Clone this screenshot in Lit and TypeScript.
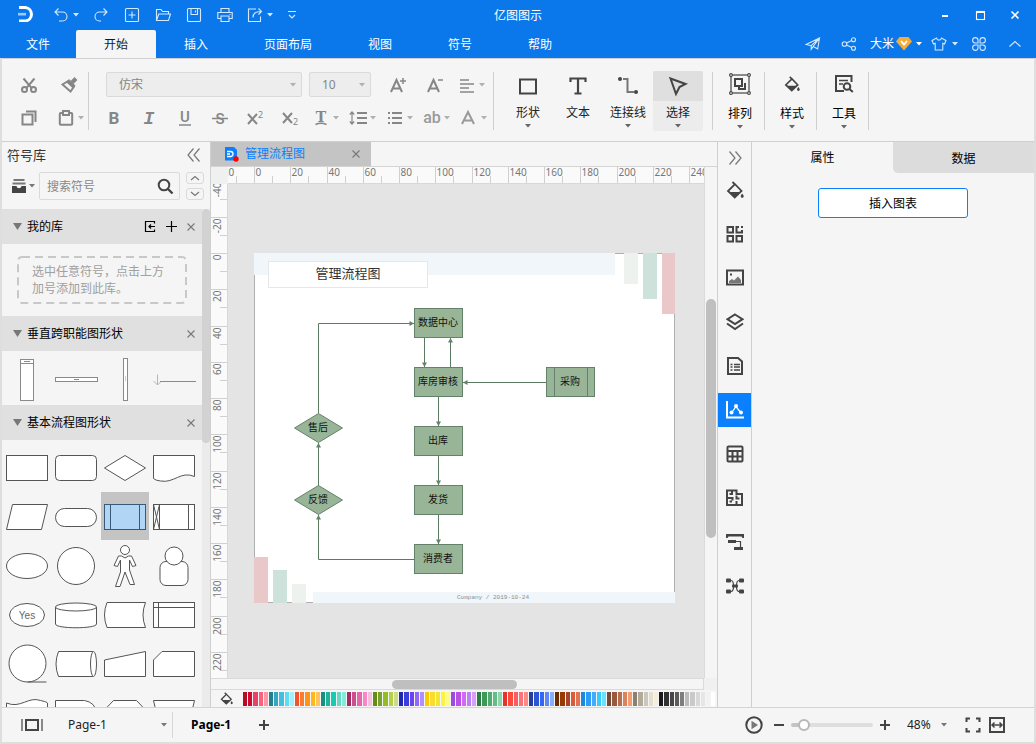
import { LitElement, html, svg, css, type TemplateResult, type SVGTemplateResult } from "lit";
import { customElement, state } from "lit/decorators.js";
import { classMap } from "lit/directives/class-map.js";

/* ---------- icon helpers ---------- */

const icon = (body: SVGTemplateResult, w = 16, h = 16) => html`<svg
  class="ico" width=${w} height=${h} viewBox="0 0 ${w} ${h}" aria-hidden="true">${body}</svg>`;

const caret = () => html`<svg class="caret" width="6" height="4" viewBox="0 0 6 4" aria-hidden="true"><path d="M0 0h6L3 3.5z"/></svg>`;

const cross = () => icon(svg`<path d="M1.5 1.5l7 7M8.5 1.5l-7 7" stroke-width="1.1"/>`, 10, 10);

const bucket = (s = 18) => html`<svg class="ico" width=${s} height=${s} viewBox="0 0 18 18" aria-hidden="true">
  <path d="M6.5 1l2.5 2.5M9 3.2L2 10l6.7 6.5 6.8-6.500z" stroke-width="1.8"/>
  <path class="f" d="M3 11h11.500l-5.800 5.500z"/><path class="f" d="M16.200 12.500c1 1.400 1.500 2 1.500 2.800a1.500 1.500 0 0 1-3 0c0-.8.500-1.400 1.500-2.800z"/></svg>`;

const I = {
  logo: svg`<path d="M1 1.5h6.500a6.800 6.800 0 0 1 0 13.500H1" fill="none" stroke="#fff" stroke-width="3"/><path d="M0 8.200h8" stroke="#9ccbfb" stroke-width="2.600"/>`,
  undo: svg`<path d="M5.5 1.5L2 5l3.500 3.500M2 5h7.500a4.500 4.500 0 0 1 0 9H6"/>`,
  redo: svg`<path d="M10.5 1.5L14 5l-3.500 3.500M14 5H6.500a4.500 4.500 0 0 0 0 9H8"/>`,
  add: svg`<rect x="1.5" y="1.5" width="13" height="13" rx="1"/><path d="M8 4.5v7M4.500 8h7"/>`,
  open: svg`<path d="M1.500 13.500V2.500h4.500l1.500 2h6v2.500M1.500 13.500l2.300-6.500h11.700l-2 6.500z"/>`,
  save: svg`<rect x="1.500" y="1.500" width="13" height="13" rx="1"/><path d="M5 1.500v6h6.500v-6M9.500 3.500v2"/>`,
  print: svg`<path d="M4 5V1.500h8V5M4 11.500H.800V5.500h14.400v6H12M4 9h8v5.500H4zM12.500 7.500h1"/>`,
  export: svg`<path d="M9 2H1.500v12.500h12V9.500M6 10.500c0-4 2.500-6 8-6M11.500 1.500l3 3-3 3"/>`,
  more: svg`<path d="M4 4.500h8M5 8l3 3 3-3"/>`,
  send: svg`<path d="M1 8.500L14.500 2l-1.800 11-4.500-2.500-2 2.800V9.700zM6.200 9.700L14.500 2 8.200 10.500"/>`,
  share: svg`<circle cx="3.500" cy="8" r="2.300"/><circle cx="12.500" cy="3.700" r="2"/><circle cx="12.500" cy="12.300" r="2"/><path d="M5.500 7l5.200-2.500M5.500 9l5.200 2.500"/>`,
  gem: svg`<path d="M3.500 1h9L16 5.500 8 14.500 0 5.500z" fill="#f6ac3a" stroke="none"/><path d="M5 5l3 3.500L11 5" stroke="#fff" stroke-width="1.800"/>`,
  shirt: svg`<path d="M5.500 2C6 4.800 10 4.800 10.500 2L15 4.500 13.500 8l-1.700-.7V14H4.200V7.300L2.500 8 1 4.500z"/>`,
  apps: svg`<path d="M7 7H4a2.700 2.700 0 1 1 3-3zM9 7V4a2.700 2.700 0 1 1 3 3zM7 9H4a2.700 2.700 0 1 0 3 3zM9 9v3a2.700 2.700 0 1 0 3-3z"/>`,
  up: svg`<path d="M2.500 10.500L8 5.500l5.500 5"/>`,
  min: svg`<path d="M5 9h6" stroke-width="2"/>`,
  max: svg`<rect x="4.500" y="4.500" width="8" height="8"/><path d="M4 5h9" stroke-width="2"/>`,
  close: svg`<path d="M4.500 4.500l7 7M11.500 4.500l-7 7" stroke-width="1.600"/>`,

  cut: svg`<path d="M2.500 1.500l8.200 9.700M13.500 1.500L5.300 11.200"/><circle cx="3.500" cy="12.500" r="2.500"/><circle cx="12.500" cy="12.500" r="2.500"/>`,
  brush: svg`<path d="M1.500 7.500L8 3.500l5 6-3.500 5z"/><path d="M11 5.500l4-4" stroke-width="4"/><path class="f" d="M8 2.500l6.500 6-2.500 3L5 5z"/>`,
  copy: svg`<rect x="1.500" y="4.500" width="10" height="10"/><path d="M5 1.500h9.500V12"/>`,
  paste: svg`<rect x="1.800" y="3" width="12.400" height="11.800" rx="1"/><rect x="5" y="1" width="6" height="4" fill="#f5f5f5"/>`,
  align: svg`<path d="M1 3h9M1 7h14M1 11h9M1 15h14" stroke-width="1.700"/>`,
  under: svg`<text x="8" y="12" text-anchor="middle" class="g u">U</text><path d="M2 15h12" stroke-width="1.500"/>`,
  strike: svg`<text x="8" y="13.500" text-anchor="middle" class="g u">S</text><path d="M0 8.500h16" stroke-width="1.500"/>`,
  bold: svg`<text x="7" y="14" text-anchor="middle" class="g b">B</text>`,
  ital: svg`<text x="7" y="14" text-anchor="middle" class="g i">I</text>`,
  sup: svg`<path d="M1 4l9 10M10 4L1 14"/><text x="11" y="8" class="g n">2</text>`,
  sub: svg`<path d="M1 3l9 10M10 3L1 13"/><text x="11" y="15" class="g n">2</text>`,
  effect: svg`<text x="8" y="11.500" text-anchor="middle" class="g t">T</text><path d="M2.500 14.500q5.500-2.500 11 0" stroke-width="1.500"/>`,
  spacing: svg`<path d="M7 3h10M7 8h10M7 13h10"/><path d="M2 2v12M-.2 4.500L2 2l2.200 2.500M-.2 11.500L2 14l2.200-2.500" stroke-width="1.200"/>`,
  list: svg`<path d="M5 3h10M5 8h10M5 13h10"/><path d="M1 3h2M1 8h2M1 13h2"/>`,
  ab: svg`<text x="8" y="13" text-anchor="middle" class="g ab">ab</text>`,
  fontA: svg`<path d="M1 14L7 2l6 12M3 10.500h8" stroke="#9a9a9a"/>`,
  bigger: svg`<path d="M1 15L6.500 3 12 15M3 11.500h7"/><path d="M13 1v6M10 4h6" stroke-width="1.500"/>`,
  smaller: svg`<path d="M1 15L6.500 3 12 15M3 11.500h7"/><path d="M11 3h5" stroke-width="1.500"/>`,

  shape: svg`<rect x="3" y="4.500" width="16" height="14"/>`,
  text: svg`<path d="M3.500 7V3.500h15V7M11 3.500V19M7.500 18.500h7" stroke-width="2.200"/>`,
  conn: svg`<path d="M6 4h4.500v13H17" stroke="#777"/><circle class="f" cx="3" cy="4" r="2"/><circle class="f" cx="19" cy="17" r="2"/>`,
  pick: svg`<path d="M3.500 3.500l15 5.500-6 3-3.500 7z"/>`,
  arrange: svg`<rect x="2" y="2" width="18" height="18" stroke-width="1.200"/><g fill="#f5f5f5" stroke-width="1.100"><circle cx="2" cy="2" r="1.400"/><circle cx="20" cy="2" r="1.400"/><circle cx="2" cy="20" r="1.400"/><circle cx="20" cy="20" r="1.400"/></g><rect x="6" y="6" width="7" height="7"/><path d="M16 10v6h-6v-2"/>`,
  tools: svg`<path d="M18.500 9V3H3v15h8"/><path d="M6 7.500h9M6 11h4" stroke-width="1.500"/><circle cx="14" cy="13.500" r="3.300"/><path d="M16.500 16l3.300 3"/>`,

  chevL: svg`<path d="M7.500 1.500L2 8l5.500 6.500M13.500 1.500L8 8l5.500 6.500"/>`,
  chevR: svg`<path d="M2.500 1.500L8 8l-5.500 6.500M8.500 1.500L14 8l-5.500 6.500"/>`,
  stash: svg`<path class="m" d="M2.500 1h11v2h-11zM1.500 4.500h13v2h-13z"/><path class="f" d="M1 8h4.500c.5 3 4.500 3 5 0H15v7H1z"/>`,
  search: svg`<circle cx="7" cy="7" r="5.300"/><path d="M11 11l4.500 4.500" stroke-width="2.400"/>`,
  imp: svg`<path d="M10.500 3.500v-2h-9v10h9v-2"/><path d="M11 6.500H5M7 4.500l-2 2 2 2"/>`,
  plus: svg`<path d="M6.500 1v11M1 6.500h11"/>`,

  grid: svg`<rect x="1.500" y="2" width="5.500" height="5.500"/><path d="M13 2h-2.500v5.500H16V5"/><rect x="1.500" y="11" width="5.500" height="5.500"/><rect x="10.500" y="11" width="5.500" height="5.500"/><path d="M16 1v2"/>`,
  image: svg`<rect x="1" y="1.500" width="16" height="14"/><path class="m" d="M3 14v-2l3-2 2 1.500 4-4L15 11v3z"/><rect class="f" x="4" y="4.500" width="2" height="2" stroke="none"/>`,
  layers: svg`<path d="M9 1.500l7.500 4.700L9 11 1.500 6.200z"/><path d="M1 10.500l8 5.500 8-5.500"/>`,
  doc: svg`<path d="M2 1h10l4 3.500V17H2z"/><path d="M4.500 7.500h2M4.500 10h2M4.500 13h2M8 7.500h6M8 10h6M8 13h6" stroke-width="1.300"/>`,
  chart: svg`<path d="M1 0v16.500h17" stroke-width="2"/><path d="M5.500 12L10 5.500l5 6.500" stroke-width="1.300"/><g class="f"><circle cx="5.500" cy="11.500" r="2"/><circle cx="10" cy="5" r="2"/><circle cx="15" cy="11.500" r="2"/></g>`,
  table: svg`<rect x="1.500" y="1.500" width="15" height="15" rx="1"/><path d="M1.500 6h15M1.500 11.500h15M6.500 6v10.500M11.500 6v10.500"/>`,
  plan: svg`<path d="M1 1.500h9.500V5H16v11H1zM6 1.500V5H3.500M1 9h5.500v2.500M10.500 6.500v3h3M6 12.500H3.500M10.500 12v4"/>`,
  gantt: svg`<path class="f" d="M0 1h18v4h-1.500L15.500 3.500h-13L1.500 5H0zM2 7h8v3H2zM8 14h9v3H8z"/><path d="M10 8.500h4.500V14" stroke-width="1.200"/>`,
  mind: svg`<g class="f"><rect x="0" y="1.500" width="5" height="4" rx="1"/><rect x="13" y="1.500" width="5" height="4" rx="1"/><rect x="0" y="12.500" width="5" height="4" rx="1"/><rect x="13" y="12.500" width="5" height="4" rx="1"/><rect x="6" y="7.500" width="6" height="3" rx="1"/></g><path d="M5 3.500q2.500 0 2.500 5.500T5 14.500M13 3.500q-2.500 0-2.500 5.500t2.500 5.500" stroke-width="1.200"/>`,

  pages: svg`<rect x="6" y="3" width="12" height="10"/><path d="M2 2v12M22 2v12" stroke="#888"/>`,
  play: svg`<circle cx="9" cy="9" r="7.700"/><path class="m" d="M6.500 4.800L13 9l-6.500 4.200z"/>`,
  full: svg`<path d="M1.500 5V1.500H5M11 1.500h3.500V5M14.500 11v3.500H11M5 14.500H1.500V11"/>`,
  fit: svg`<rect x="1" y="1" width="14" height="14"/><path d="M3 8h10M5.500 5.500L3 8l2.500 2.500M10.500 5.500L13 8l-2.500 2.500" stroke-width="1.500"/>`,
};

/* ---------- data ---------- */

const MENU = ["文件", "开始", "插入", "页面布局", "视图", "符号", "帮助"];

const PALETTE = (
  "b30f23 cf0a33 ea4164 f9637b fa98a6 267f8c 35a7c4 41bfdc 5edcf2 a3f0fc f2542b fb7a33 ff9419 ffb81a fec35e " +
  "18907b 1cb49b 18cbb0 64d9c6 86ead9 9f2f63 cd4d8e e566aa f986c7 f0c2dc 678b14 78a32b 93bd22 b3d046 ccdb8b " +
  "2127ae 3a3fd9 6c41ef 9069f8 ad90f8 fbc905 fbdb2f f0e72e fbf243 fcfb87 9a4cdd bb51e4 d267f8 bb82f8 d79ffb " +
  "2c7b46 3b9955 4fab70 63bd87 8fd5aa e6332b fb4b3c fb5d60 fc7475 fc8b85 233f9e 2c55d4 3366f5 6188fb 88aef7 " +
  "6b2c05 973a05 a9442a d65c3b e17354 1b89dc 2f9df7 40acfd 38ccfc 69e3fd 774a38 985941 ba6e50 d8855f f79c6f " +
  "8c8072 b2ab9c c9c8b9 e3decd f4eedb 1b1b1b 323234 464646 5c5c5c 7e7e7e bcbcbc c9c9c9 d8d8d8 e6e6e6 f2f2f2 ffffff"
).split(" ");

const NODES = [
  { t: "数据中心", y: 55 },
  { t: "库房审核", y: 114 },
  { t: "出库", y: 173 },
  { t: "发货", y: 232 },
  { t: "消费者", y: 291 },
];

/* Each symbol sits in a 48 x 48 cell. */
const SHAPES: SVGTemplateResult[] = [
  svg`<rect x="3.500" y="12.500" width="41" height="25"/>`,
  svg`<rect x="3.500" y="12.500" width="41" height="25" rx="4"/>`,
  svg`<path d="M24 12.500L44.500 25 24 37.500 3.500 25z"/>`,
  svg`<path d="M3.500 12.500h41v21c-14-6-20 7-34 4.500q-5-.5-7-2.500z"/>`,
  svg`<path d="M9.500 12.500h35l-6 25h-35z"/>`,
  svg`<rect x="3.500" y="16.500" width="41" height="18" rx="9"/>`,
  svg`<rect x="3.500" y="12.500" width="41" height="25"/><path d="M9.500 12.500v25M38.500 12.500v25"/>`,
  svg`<rect x="3.500" y="12.500" width="41" height="25"/><path d="M9.500 12.500v25M38.500 12.500v25M3.500 12.500l6 25M9.500 12.500l-6 25"/>`,
  svg`<ellipse cx="24" cy="25" rx="20.500" ry="12.500"/>`,
  svg`<circle cx="24" cy="25" r="18.500"/>`,
  svg`<circle cx="24" cy="9" r="4.500"/><path d="M17.500 15h3l3.500 2 3.500-2h3l4.500 9.500-3.500 1-3-6.500v10l5 14.500h-4.500L24 31l-5 14.500h-4.500l5-14.500V19l-3 6.500-3.500-1z"/>`,
  svg`<rect x="10" y="20.500" width="28" height="24" rx="6"/><circle cx="24" cy="15" r="9"/>`,
  svg`<ellipse cx="24" cy="25" rx="17.500" ry="11.500"/><text x="24" y="29" text-anchor="middle">Yes</text>`,
  svg`<path d="M3.500 17v17c0 5 41 5 41 0V17"/><ellipse cx="24" cy="17" rx="20.500" ry="4"/>`,
  svg`<path d="M6 12.500h38.500q-5 12.500 0 25H6q-5-12.500 0-25z"/>`,
  svg`<rect x="3.500" y="12.500" width="41" height="25"/><path d="M8.500 12.500v25M3.500 17.500h41"/>`,
  svg`<circle cx="24.500" cy="24.500" r="18.500"/><path d="M24.500 43h19"/>`,
  svg`<path d="M41.500 12.500H6.500q-5 12.500 0 25h35"/><ellipse cx="41.500" cy="25" rx="3" ry="12.500"/>`,
  svg`<path d="M3.500 21l41-8.500v25h-41z"/>`,
  svg`<path d="M12 12.500h32.500v25h-41V21z"/>`,
  svg`<path d="M3.500 15c14 6 22-7 34-2.500 4 1 5 1 7 2.500v22h-41z"/>`,
  svg`<path d="M3.500 12.500h29q11 2 12 12.500v12.500h-41z"/>`,
  svg`<path d="M3.500 22l9-9.500h23l9 9.500v15h-41z"/>`,
  svg`<path d="M3.500 12.500h41l-6 25h-29z"/>`,
];

const RAIL: [string, () => TemplateResult][] = [
  ["填充", () => bucket()],
  ["符号", () => icon(I.grid, 18, 18)],
  ["图片", () => icon(I.image, 18, 18)],
  ["图层", () => icon(I.layers, 18, 18)],
  ["备注", () => icon(I.doc, 18, 18)],
  ["图表", () => icon(I.chart, 18, 18)],
  ["表格", () => icon(I.table, 18, 18)],
  ["平面图", () => icon(I.plan, 18, 18)],
  ["甘特图", () => icon(I.gantt, 18, 18)],
  ["思维导图", () => icon(I.mind, 18, 18)],
];

/* Ruler marks: one label for every 20 units. */
const UNIT = 36.25;
const marks = (from: number, to: number, origin: number) =>
  Array.from({ length: to - from + 1 }, (_, k) => ({
    v: (from + k) * 20,
    p: Math.round(origin + (from + k) * UNIT) + 0.5,
  }));

@customElement("app-root")
export class AppRoot extends LitElement {
  @state() private menu = 1;
  @state() private rail = 5;
  @state() private picked = 6;
  @state() private zoom = 48;

  static styles = css`
    :host {
      display: flex;
      flex-direction: column;
      height: 100vh;
      overflow: hidden;
      background: #f5f5f5;
      color: #1a1a1a;
      font: 12px/16px "Noto Sans", "Noto Sans CJK SC", sans-serif;
    }
    * { box-sizing: border-box; }
    button, input, select { font: inherit; color: inherit; margin: 0; padding: 0; border: 0; background: none; border-radius: 0; outline: 0; }
    button { display: flex; align-items: center; justify-content: center; }
    select { appearance: none; }
    svg { display: block; flex: none; }
    .ico { fill: none; stroke: currentColor; stroke-width: 2; }
    .ico .f { fill: currentColor; stroke: none; }
    .ico .m { fill: #777; stroke: none; }
    .caret { fill: currentColor; }
    .grow { flex: 1; }

    /* header */
    .head { background: #0a78ea; color: #fff; flex: none; }
    .head .ico { stroke-width: 1.1; }
    .bar { display: grid; grid-template-columns: 1fr auto 1fr; height: 30px; align-items: center; }
    .name0 { padding-top: 2px; }
    .quick { display: flex; color: #d5e8fc; }
    .quick button { width: 31px; height: 30px; gap: 4px; }
    .quick .drop { width: 39px; }
    .quick .last { width: 26px; }
    .logo { width: 46px; padding: 6px 0 0 18px; }
    .win { display: flex; justify-content: flex-end; padding-right: 4px; }
    .win button { width: 35px; height: 28px; }
    .menus { display: flex; height: 28px; }
    .menus .tab { padding: 2px 28px 0; height: 28px; }
    .menus .tab:first-child { padding: 2px 26px 0; }
    .menus .on { background: #f5f5f5; color: #1a1a1a; border-radius: 2px 2px 0 0; }
    .acct { display: flex; align-items: center; margin-left: auto; padding-right: 13px; color: #d5e8fc; }
    .acct button { height: 24px; margin-left: 20px; }
    .acct .user { color: #fff; gap: 2px; margin-left: 13px; }
    .acct .user .caret { margin-left: 2px; }
    .acct .skin { gap: 5px; margin-left: 9px; }
    .acct .apps { margin-left: 13px; }

    .frame { flex: 1; min-height: 0; display: flex; flex-direction: column; border: solid #dedede; border-width: 0 2px 2px; }

    /* ribbon */
    .ribbon { display: flex; height: 84px; flex: none; border: solid #cfcfcf; border-width: 1px 0; padding: 13px 0 10px; color: #868686; }
    .ribbon .caret { fill: #b0b0b0; }
    .clip { display: grid; grid-template: 25px 24px / 40px 40px; row-gap: 9px; padding-left: 7px; margin-right: -1px; }
    .clip button, .fonts button { gap: 4px; }
    .clip .drop { padding-left: 4px; }
    .sep { width: 1px; height: 58px; background: #cfcfcf; }
    .fonts { display: flex; flex-direction: column; gap: 9px; margin: 0 1px 0 8px; }
    .row { display: flex; height: 25px; }
    .row + .row { height: 24px; }
    .row button { width: 35px; }
    .row .w { width: 37px; }
    .row .ico, .clip .ico { overflow: visible; }
    .combo { display: grid; align-items: center; border: 1px solid #dadada; border-radius: 2px; background: #ededed; width: 196px; margin: 0 7px 0 9px; }
    .combo.size { width: 62px; margin: 0 8px 0 0; }
    .combo select, .combo .caret { grid-area: 1 / 1; }
    .combo select { width: 100%; height: 23px; padding-left: 12px; }
    .combo .caret, .pagepick .caret { justify-self: end; margin-right: 5px; pointer-events: none; }
    .g { fill: currentColor; stroke: none; }
    .g.b { font: 700 17px Roboto; }
    .g.i { font: italic 700 18px "Liberation Mono"; }
    .g.u { font: 500 15px Roboto; }
    .g.n { font: 9px "Noto Sans"; }
    .g.t { font: 700 14px "DejaVu Serif"; }
    .g.ab { font: 500 16px Roboto; fill: #9a9a9a; }
    .big { display: flex; padding-left: 9px; margin-right: 9px; }
    .tool { width: 50px; height: 60px; flex-direction: column; justify-content: flex-start; color: #222; margin-top: -1px; border-radius: 2px; }
    .tool .pic { height: 30px; width: 100%; display: grid; place-items: center; color: #444; }
    .tool .name { margin-top: 4px; height: 17px; }
    .tool .caret { fill: #666; margin-top: 2px; }
    .tool.on { background: #ececec; }
    .tool.on .pic { background: #dfdfdf; border-radius: 2px 2px 0 0; }
    .tool.far { width: 51px; padding-left: 3px; }
    .tool.far .pic { height: 26px; }
    .tool.far .name { margin-top: 9px; color: #000; }

    /* body */
    .body { flex: 1; min-height: 0; display: flex; }
    .lib { width: 209px; border-right: 1px solid #cfcfcf; display: flex; flex-direction: column; flex: none; }
    .libtop { display: flex; justify-content: space-between; align-items: center; height: 26px; padding: 0 8px 0 5px; font-size: 13px; color: #333; }
    .libtop .ico, .rail .more .ico { stroke-width: 1.2; color: #777; }
    .find { display: flex; height: 28px; margin: 4px 6px 9px 0; }
    .stash { width: 37px; gap: 2px; color: #444; padding-left: 5px; }
    .stash .caret { fill: #777; }
    .box { flex: 1; display: flex; align-items: center; border: 1px solid #dadada; border-radius: 2px; padding: 0 5px 0 7px; color: #444; }
    .box input { flex: 1; width: 0; height: 26px; }
    .box input::placeholder { color: #888; opacity: 1; }
    .steps { display: grid; gap: 4px; width: 18px; margin-left: 6px; }
    .steps button { border: 1px solid #dadada; border-radius: 3px; height: 12px; color: #777; }
    .steps .ico { stroke-width: 1.2; }
    .scroll { flex: 1; min-height: 0; display: flex; background: #ebebeb; }
    .list { flex: 1; overflow: hidden; background: #f5f5f5; }
    .thumb { width: 8px; height: 47%; background: #d2d2d2; border-radius: 4px; }
    .sec { display: flex; align-items: center; height: 35px; background: #e0e0e0; color: #000; padding: 0 6px 0 11px; }
    .sec .tri { fill: #777; margin-right: 5px; }
    .sec h2 { font: inherit; margin: 0; flex: 1; }
    .sec button { margin-left: 8px; height: 21px; }
    .sec .ico { stroke-width: 1.2; }
    .sec .x { color: #777; margin-left: 8px; }
    .hint { margin: 12px 15px; border-radius: 4px; padding: 6px 15px; height: 48px; line-height: 17px; color: #a0a0a0; display: grid; }
    .hint svg, .hint p { grid-area: 1 / 1; }
    .hint svg { margin: -6px -15px; }
    .hint p { margin: 1px 0 0; }
    .lanes { height: 54px; fill: #fff; stroke: #8a8a8a; }
    .shapes { display: grid; grid-template-columns: repeat(4, 48px); gap: 1px; padding: 3px 0 0 1px; }
    .shapes button { height: 48px; }
    .shapes svg { fill: #fff; stroke: #555; }
    .shapes text { fill: #666; stroke: none; font: 10px "Liberation Sans"; }
    .shapes .on { background: #c4c4c4; }
    .shapes .on svg { fill: #b0d5f5; stroke: #3a5878; }

    .mid { flex: 1; min-width: 0; display: flex; flex-direction: column; }
    .docs { height: 25px; border-bottom: 1px solid #d4d4d4; display: flex; flex: none; }
    .doc { display: flex; align-items: center; width: 160px; background: #c4c4c4; color: #0a80ff; padding: 0 10px 0 12px; gap: 6px; }
    .doc button { margin-left: auto; color: #777; }
    .work { flex: 1; min-height: 0; display: grid; grid-template: 17px 1fr 12px / 17px 1fr 13px; }
    .work > * { min-width: 0; min-height: 0; overflow: hidden; }
    .corner { background: #f0f0f0; }
    .rule { background: #fafafa; stroke: #d0d0d0; }
    .rule.h { border-bottom: 1px solid #d8d8d8; }
    .rule.v { border-right: 1px solid #d8d8d8; }
    .rule text { fill: #777; stroke: none; font: 10px "Noto Sans"; }
    .vbar { grid-area: 1 / 3 / 3 / 4; border-left: 1px solid #dadada; display: flex; flex-direction: column; padding: 0 1px; }
    .vbar .run { height: 239px; margin-top: 132px; background: #bfbfbf; border-radius: 5px; }
    .canvas { background: #e4e4e4; }
    .hbar { grid-column: 1 / 3; border: 1px solid #dadada; border-left: 0; padding: 1px 0 0 181px; }
    .hbar .run { height: 9px; width: 125px; background: #bfbfbf; border-radius: 5px; }
    .swatches { height: 17px; display: flex; align-items: center; color: #444; padding: 0 1px 0 9px; flex: none; }
    .cells { display: flex; flex: 1; gap: 1px; height: 14px; margin-left: 10px; }
    .cells button { flex: 1; min-width: 0; }
    .node { fill: #98b598; stroke: #64826a; }
    .link { fill: none; stroke: #5c7a62; }
    .tip { fill: #64826a; }
    .canvas text { font: 10px "Noto Sans CJK SC"; fill: #111; text-anchor: middle; }
    .canvas .title { font-size: 13px; fill: #333; }
    .canvas .foot { font: 6px "Liberation Mono"; fill: #8a8f92; }

    .rail { width: 35px; flex: none; border: solid #cfcfcf; border-width: 0 1px; display: flex; flex-direction: column; gap: 10px; color: #444; }
    .rail button { height: 34px; width: 33px; flex: none; }
    .rail .more { height: 31px; margin-bottom: -10px; }
    .rail .on { background: #0a80ff; color: #fff; }

    .side { width: 282px; flex: none; }
    .sidetabs { display: flex; }
    .sidetabs button { flex: 1; height: 31px; color: #000; }
    .sidetabs .off { background: #dcdcdc; border-radius: 0 0 0 5px; padding-top: 2px; }
    .insert { width: 150px; height: 30px; margin: 15px auto; border: 1px solid #0a80ff; border-radius: 3px; background: #fff; color: #000; padding-top: 1px; }

    /* status */
    .status { height: 35px; flex: none; border-top: 1px solid #d4d4d4; display: flex; align-items: center; color: #444; padding-right: 29px; }
    .status .caret { fill: #777; }
    .pages { margin: 0 24px 0 18px; }
    .pagepick { display: grid; align-items: center; width: 105px; height: 26px; border-right: 1px solid #d8d8d8; color: #222; }
    .pagepick select, .pagepick .caret, .pct select, .pct .caret { grid-area: 1 / 1; }
    .page { font-weight: 700; color: #000; margin: 0 27px 0 18px; }
    .zoom { width: 82px; height: 14px; margin: 0 6px; appearance: none; }
    .zoom::-webkit-slider-runnable-track { height: 4px; border-radius: 2px; background: linear-gradient(90deg, #c4c4c4 15%, #dedede 15%); }
    .zoom::-webkit-slider-thumb { appearance: none; width: 12px; height: 12px; margin-top: -4px; border-radius: 50%; background: #fff; border: 2px solid #b8b8b8; }
    .pct { display: grid; align-items: center; width: 40px; margin: 0 18px 0 16px; color: #222; }
    .pct .caret { justify-self: end; pointer-events: none; }
    .play { margin-right: 10px; }
    .fit { margin-left: 8px; }
  `;

  private btn(label: string, body: unknown, cls = "") {
    return html`<button class=${cls} aria-label=${label} title=${label}>${body}</button>`;
  }

  private tool(label: string, pic: unknown, cls = "", drop = true) {
    return html`<button class="tool ${cls}"><span class="pic">${pic}</span><span class="name">${label}</span>${drop ? caret() : ""}</button>`;
  }

  private header() {
    return html`<header class="head">
      <div class="bar">
        <div class="quick">
          <span class="logo"><svg width="16" height="16" viewBox="0 0 16 16">${I.logo}</svg></span>
          ${this.btn("撤销", [icon(I.undo), caret()], "drop")} ${this.btn("重做", icon(I.redo))}
          ${this.btn("新建", icon(I.add))} ${this.btn("打开", icon(I.open))} ${this.btn("保存", icon(I.save))}
          ${this.btn("打印", icon(I.print))} ${this.btn("导出", [icon(I.export), caret()], "drop")}
          ${this.btn("更多", icon(I.more), "last")}
        </div>
        <span class="name0">亿图图示</span>
        <div class="win">${this.btn("最小化", icon(I.min))}${this.btn("最大化", icon(I.max))}${this.btn("关闭", icon(I.close))}</div>
      </div>
      <nav class="menus">
        ${MENU.map((m, i) => html`<button class=${classMap({ tab: true, on: i === this.menu })} @click=${() => (this.menu = i)}>${m}</button>`)}
        <div class="acct">
          ${this.btn("发送", icon(I.send))} ${this.btn("分享", icon(I.share))}
          <button class="user">大米 ${icon(I.gem)}${caret()}</button>
          ${this.btn("皮肤", [icon(I.shirt), caret()], "skin")} ${this.btn("应用", icon(I.apps), "apps")}
          ${this.btn("收起", icon(I.up))}
        </div>
      </nav>
    </header>`;
  }

  private ribbon() {
    const b = (l: string, i: SVGTemplateResult, c = "") => this.btn(l, icon(i), c);
    const d = (l: string, i: SVGTemplateResult, c = "w") => this.btn(l, [icon(i), caret()], c);
    return html`<section class="ribbon">
      <div class="clip">${b("剪切", I.cut)}${b("格式刷", I.brush)}${b("复制", I.copy)}${d("粘贴", I.paste, "drop")}</div>
      <i class="sep"></i>
      <div class="fonts">
        <div class="row">
          <label class="combo"><select aria-label="字体"><option>仿宋</option></select>${caret()}</label>
          <label class="combo size"><select aria-label="字号"><option>10</option></select>${caret()}</label>
          ${b("增大字号", I.bigger, "w")}${b("减小字号", I.smaller, "w")}${d("对齐", I.align)}
        </div>
        <div class="row">
          ${b("加粗", I.bold)}${b("斜体", I.ital)}${b("下划线", I.under)}${b("删除线", I.strike)}${b("上标", I.sup)}${b("下标", I.sub)}
          ${d("文字效果", I.effect)}${d("行距", I.spacing)}${d("列表", I.list)}${d("大小写", I.ab)}${d("字体颜色", I.fontA)}
        </div>
      </div>
      <i class="sep"></i>
      <div class="big">
        ${this.tool("形状", icon(I.shape, 22, 22))}${this.tool("文本", icon(I.text, 22, 22), "", false)}
        ${this.tool("连接线", icon(I.conn, 22, 22))}${this.tool("选择", icon(I.pick, 22, 22), "on")}
      </div>
      <i class="sep"></i>${this.tool("排列", icon(I.arrange, 22, 22), "far")}
      <i class="sep"></i>${this.tool("样式", bucket(16), "far")}
      <i class="sep"></i>${this.tool("工具", icon(I.tools, 22, 22), "far")}
      <i class="sep"></i>
    </section>`;
  }

  private section(name: string, extra: unknown = "") {
    return html`<div class="sec"><svg class="tri" width="9" height="7"><path d="M0 0h9L4.500 7z"/></svg>
      <h2>${name}</h2>${extra}${this.btn("关闭", cross(), "x")}</div>`;
  }

  private library() {
    return html`<aside class="lib">
      <div class="libtop"><span>符号库</span>${this.btn("收起", icon(I.chevL))}</div>
      <div class="find">
        ${this.btn("符号库", [icon(I.stash), caret()], "stash")}
        <label class="box"><input type="text" placeholder="搜索符号" aria-label="搜索符号" />${icon(I.search, 17, 17)}</label>
        <div class="steps">
          ${this.btn("上一个", icon(svg`<path d="M1 5l4-3.500L9 5"/>`, 10, 6))}
          ${this.btn("下一个", icon(svg`<path d="M1 1l4 3.500L9 1"/>`, 10, 6))}
        </div>
      </div>
      <div class="scroll">
        <div class="list">
          ${this.section("我的库", html`${this.btn("导入", icon(I.imp, 13, 13))}${this.btn("添加", icon(I.plus, 13, 13))}`)}
          <div class="hint">
            <svg width="170" height="48" fill="none" stroke="#c8c8c8" stroke-width="2" stroke-dasharray="8 5"><rect x="1" y="1" width="168" height="46" rx="4"/></svg>
            <p>选中任意符号，点击上方加号添加到此库。</p>
          </div>
          ${this.section("垂直跨职能图形状")}
          <svg class="lanes" width="200" height="54">
            <rect x="18.500" y="8.500" width="13" height="41"/><path d="M18.500 12.500h13M22 10.500h6"/>
            <rect x="53.500" y="26.500" width="42" height="4"/><path d="M72 28.500h5"/>
            <rect x="121.500" y="7.500" width="4" height="42"/><path d="M123.500 25v5" stroke="#ccc"/>
            <path d="M155.500 23.500v10M151.500 30l4 4 4-4" stroke="#b5b5b5" fill="none"/><path d="M158 30.500h36"/>
          </svg>
          ${this.section("基本流程图形状")}
          <div class="shapes">
            ${SHAPES.map((s, i) => html`<button aria-label="形状 ${i + 1}" class=${classMap({ on: i === this.picked })}
              @click=${() => (this.picked = i)}><svg width="48" height="48">${s}</svg></button>`)}
          </div>
        </div>
        <div class="thumb"></div>
      </div>
    </aside>`;
  }

  private diagram() {
    const tip = (x: number, y: number, r: number) => svg`<path class="tip" transform="translate(${x} ${y}) rotate(${r})" d="M0 0l-4.500-2.500v5z"/>`;
    const diamond = (y: number, t: string) => svg`<path class="node" d="M64.500 ${y - 14.5}l24 14.500-24 14.500-24-14.500z"/><text x="64" y=${y + 3}>${t}</text>`;
    return html`<svg width="476" height="495" viewBox="-26 -69 476 495" role="img" aria-label="管理流程图">
      <rect x="0.500" y="0.500" width="420" height="349" fill="#fff" stroke="#b0b0b0"/>
      <rect width="361" height="22" fill="#f0f6f9"/>
      <rect x="370" width="14" height="31" fill="#edf2ee"/><rect x="389" width="14" height="46" fill="#cde2da"/><rect x="408" width="13" height="61" fill="#eac8ca"/>
      <rect y="304" width="14" height="46" fill="#eac8ca"/><rect x="19" y="317" width="14" height="33" fill="#cde2da"/><rect x="38" y="331" width="14" height="19" fill="#edf2ee"/>
      <rect x="59" y="339" width="362" height="11" fill="#f0f6f9"/>
      <rect x="14.500" y="8.500" width="159" height="26" fill="#fff" stroke="#e4e8ea"/>
      <text class="title" x="94" y="25">管理流程图</text>
      <path class="link" d="M64.500 160V70.500H160M170.500 85v29M196.500 114V85M292 129.500H209M184.500 144v29M184.500 203v29M184.500 262v29M160 306.500H64.500V262M64.500 233v-43"/>
      ${tip(160, 70.5, 0)}${tip(170.5, 114, 90)}${tip(196.5, 85, -90)}${tip(209, 129.5, 180)}
      ${tip(184.5, 173, 90)}${tip(184.5, 232, 90)}${tip(184.5, 291, 90)}${tip(64.5, 262, -90)}${tip(64.5, 190, -90)}
      ${NODES.map((n) => svg`<rect class="node" x="160.500" y=${n.y + 0.5} width="48" height="29"/><text x="184" y=${n.y + 18}>${n.t}</text>`)}
      <rect class="node" x="292.500" y="114.500" width="48" height="29"/><path class="node" d="M300.500 114.500v29M333.500 114.500v29"/>
      <text x="316" y="132">采购</text>
      ${diamond(175, "售后")}${diamond(247, "反馈")}
      <text class="foot" x="239" y="346">Company / 2019-10-24</text>
    </svg>`;
  }

  private editor() {
    return html`<main class="mid">
      <div class="docs">
        <div class="doc">
          <svg width="16" height="16"><path d="M2 1h9l3 3v10.500H2z" fill="#0a80ff"/><path d="M4 5.500h3.500a2.500 2.500 0 0 1 0 5H4M4 8h3" fill="none" stroke="#fff" stroke-width="1.300"/><circle cx="13" cy="13" r="2.700" fill="#f00"/></svg>
          <span>管理流程图</span>${this.btn("关闭", cross())}
        </div>
      </div>
      <div class="work">
        <div class="corner"></div>
        <div class="rule h"><svg width="476" height="16">
          ${marks(-1, 12, 26).map((m) => svg`<path d="M${m.p} 0v16M${m.p + 18} 9v7"/><text x=${m.p + 1} y="9">${m.v}</text>`)}
        </svg></div>
        <div class="vbar"><div class="run"></div></div>
        <div class="rule v"><svg width="16" height="495">
          ${marks(-2, 11, 69).map((m) => svg`<path d="M0 ${m.p}h16M9 ${m.p + 18}h7"/><text text-anchor="end" transform="translate(10 ${m.p + 1}) rotate(-90)">${m.v}</text>`)}
        </svg></div>
        <div class="canvas">${this.diagram()}</div>
        <div class="hbar"><div class="run"></div></div>
        <div class="corner"></div>
      </div>
      <div class="swatches">${bucket(13)}
        <div class="cells">${PALETTE.map((c) => html`<button aria-label="#${c}" style="background:#${c}"></button>`)}</div>
      </div>
    </main>`;
  }

  private status() {
    return html`<footer class="status">
      ${this.btn("页面", icon(I.pages, 24, 16), "pages")}
      <label class="pagepick"><select aria-label="页面"><option>Page-1</option></select>${caret()}</label>
      <button class="page">Page-1</button>
      ${this.btn("添加页面", icon(svg`<path d="M6 1v10M1 6h10"/>`, 12, 12))}
      <span class="grow"></span>
      ${this.btn("播放", icon(I.play, 18, 18), "play")}
      ${this.btn("缩小", icon(svg`<path d="M1 6h10"/>`, 12, 12))}
      <input class="zoom" type="range" aria-label="缩放" min="0" max="480" .value=${String(this.zoom)} />
      ${this.btn("放大", icon(svg`<path d="M6 1v10M1 6h10"/>`, 12, 12))}
      <label class="pct"><select aria-label="缩放比例"><option>48%</option></select>${caret()}</label>
      ${this.btn("全屏", icon(I.full))}${this.btn("适应", icon(I.fit), "fit")}
    </footer>`;
  }

  render() {
    return html`${this.header()}
      <div class="frame">
        ${this.ribbon()}
        <div class="body">
          ${this.library()} ${this.editor()}
          <nav class="rail">
            ${this.btn("展开", icon(I.chevR), "more")}
            ${RAIL.map(([l, ic], i) => html`<button aria-label=${l} class=${classMap({ on: i === this.rail })} @click=${() => (this.rail = i)}>${ic()}</button>`)}
          </nav>
          <aside class="side">
            <div class="sidetabs"><button>属性</button><button class="off">数据</button></div>
            <button class="insert">插入图表</button>
          </aside>
        </div>
        ${this.status()}
      </div>`;
  }
}
